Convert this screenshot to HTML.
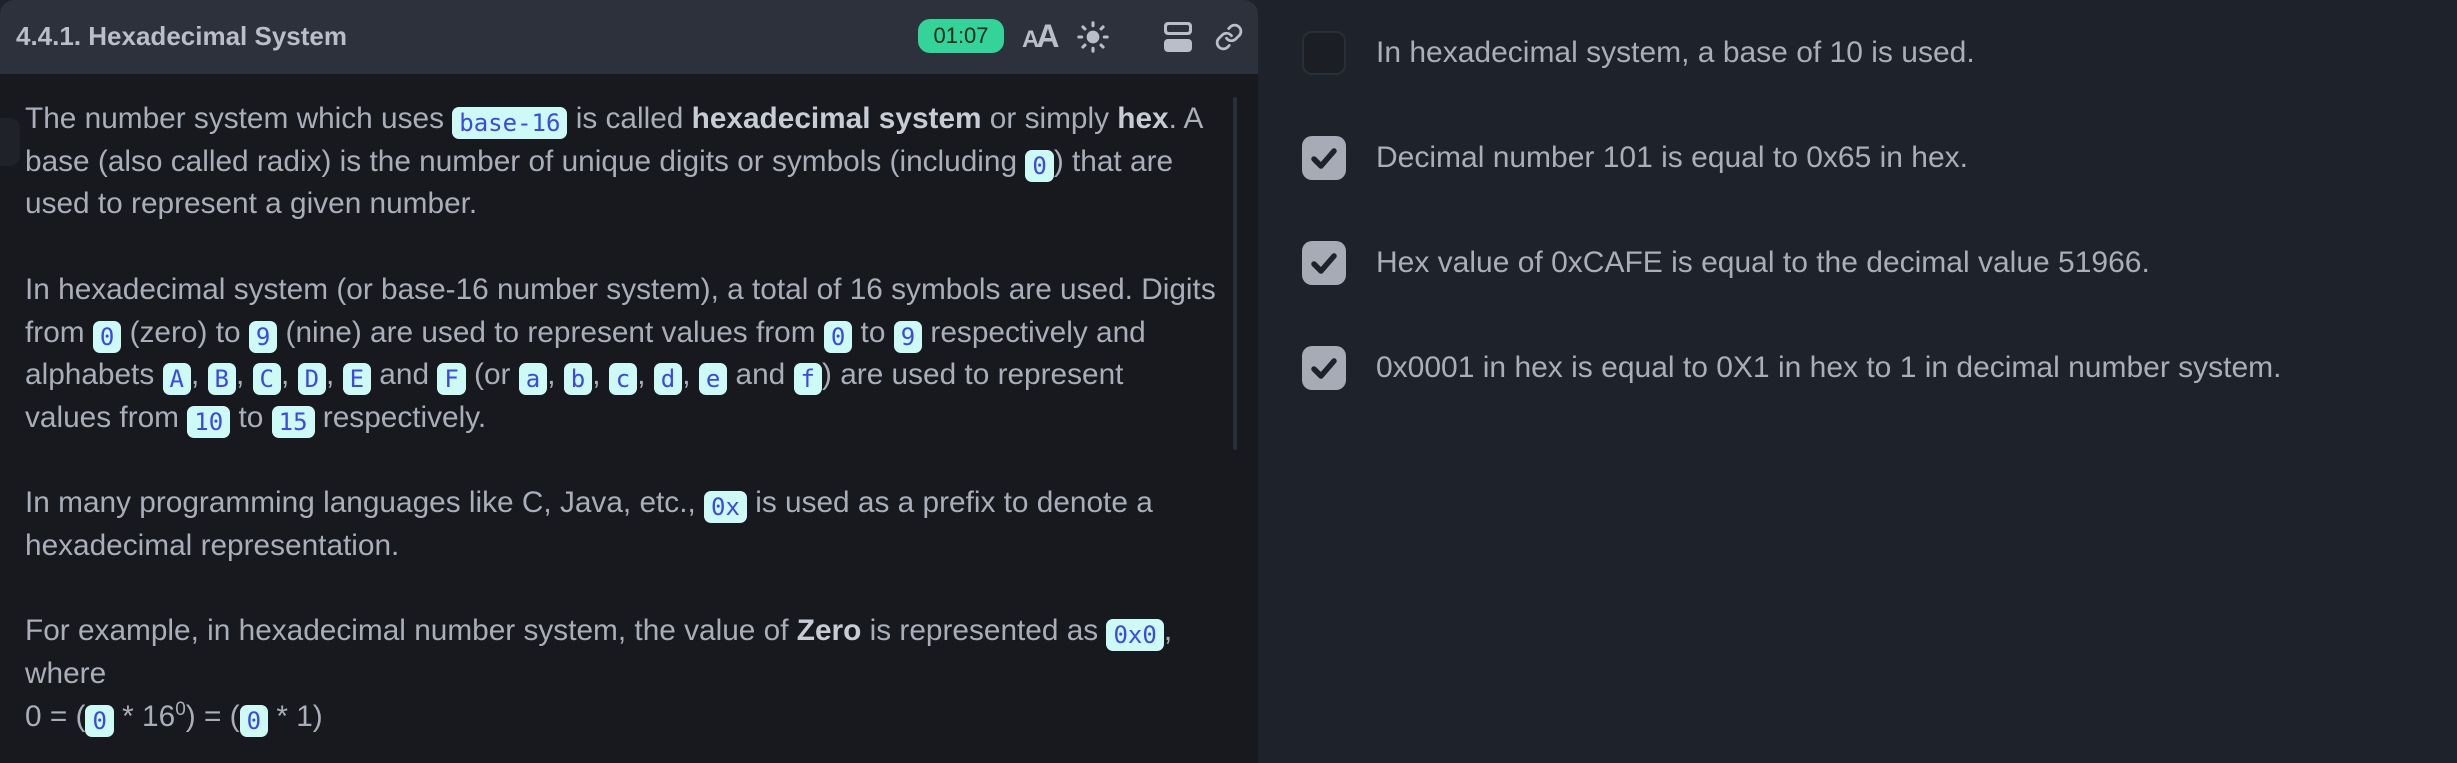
<!DOCTYPE html>
<html><head><meta charset="utf-8"><style>
*{margin:0;padding:0;box-sizing:border-box}
body{width:2457px;height:763px;background:#1e222a;font-family:"Liberation Sans",sans-serif;overflow:hidden;position:relative}
#left{position:absolute;left:0;top:0;width:1258px;height:763px;background:#17191e;border-radius:14px 14px 0 0;overflow:hidden}
#hdr{height:74px;background:#2c313c;position:relative}
#hdr .t{position:absolute;left:16px;top:21px;font-size:26px;font-weight:bold;color:#b9bec8}
.pill{position:absolute;left:918px;top:19px;width:86px;height:34px;border-radius:12px;background:#34d399;color:#0d2a1e;font-size:22px;text-align:center;line-height:34px}
#body{position:absolute;left:25px;top:98px;width:1212px;font-size:29.8px;line-height:42.7px;color:#a9aeb8}
#body p{margin-bottom:42.7px}
b{color:#c8ccd4}
code{display:inline-block;line-height:32px;font-family:"DejaVu Sans Mono",monospace;font-size:24px;background:#cdfaf6;color:#3b49e0;border-radius:7px;padding:0 7px;vertical-align:-3px}
sup{line-height:0;font-size:19px}
.sb{position:absolute;left:1233px;top:97px;width:4px;height:353px;background:#2a2e36;border-radius:2px}
.row{position:absolute;left:1302px;height:44px;width:1100px}
.cb{position:absolute;left:0;top:0;width:44px;height:44px;border-radius:10px;background:#a7abb6}
.cb.e{background:#1b1e25;border:2px solid #2a2e36}
.row span{position:absolute;left:74px;top:5px;font-size:30px;color:#a9aeb8;white-space:nowrap}
</style></head><body>
<div id="left">
<div id="hdr"><div class="t">4.4.1. Hexadecimal System</div>
<div class="pill">01:07</div>
<div style="position:absolute;left:1022px;top:18px;color:#b9bec8;font-size:32px;font-weight:bold;letter-spacing:-3px"><span style="font-size:24px">A</span>A</div>
<svg style="position:absolute;left:1076px;top:20px" width="34" height="34" viewBox="0 0 24 24" fill="#b9bec8" stroke="#b9bec8" stroke-width="2.2" stroke-linecap="round"><circle cx="12" cy="12" r="4.5" stroke="none"/><path d="M12 2v2M12 20v2M2 12h2M20 12h2M4.9 4.9l1.4 1.4M17.7 17.7l1.4 1.4M4.9 19.1l1.4-1.4M17.7 6.3l1.4-1.4"/></svg>
<svg style="position:absolute;left:1162px;top:20px" width="32" height="34" viewBox="0 0 32 34"><rect x="2" y="2" width="28" height="13" rx="4" fill="#b9bec8"/><rect x="2" y="19" width="28" height="13" rx="4" fill="#b9bec8"/><rect x="5" y="5" width="22" height="7" rx="2" fill="#2c313c"/></svg>
<svg style="position:absolute;left:1214px;top:20px" width="30" height="34" viewBox="0 0 24 24" fill="none" stroke="#b9bec8" stroke-width="2.2" stroke-linecap="round"><path d="M10 13a5 5 0 0 0 7.5.5l3-3a5 5 0 0 0-7-7l-1.7 1.7"/><path d="M14 11a5 5 0 0 0-7.5-.5l-3 3a5 5 0 0 0 7 7l1.7-1.7"/></svg>
</div>
<div style="position:absolute;left:0;top:118px;width:20px;height:48px;background:#1f2228;border-radius:0 10px 10px 0"></div>
<div class="sb"></div>
<div id="body">
<p>The number system which uses <code>base-16</code> is called <b>hexadecimal system</b> or simply <b>hex</b>. A<br>base (also called radix) is the number of unique digits or symbols (including <code>0</code>) that are<br>used to represent a given number.</p>
<p>In hexadecimal system (or base-16 number system), a total of 16 symbols are used. Digits<br>from <code>0</code> (zero) to <code>9</code> (nine) are used to represent values from <code>0</code> to <code>9</code> respectively and<br>alphabets <code>A</code>, <code>B</code>, <code>C</code>, <code>D</code>, <code>E</code> and <code>F</code> (or <code>a</code>, <code>b</code>, <code>c</code>, <code>d</code>, <code>e</code> and <code>f</code>) are used to represent<br>values from <code>10</code> to <code>15</code> respectively.</p>
<p>In many programming languages like C, Java, etc., <code>0x</code> is used as a prefix to denote a<br>hexadecimal representation.</p>
<p style="white-space:nowrap">For example, in hexadecimal number system, the value of <b>Zero</b> is represented as <code>0x0</code>,<br>where<br>0 = (<code>0</code> * 16<sup>0</sup>) = (<code>0</code> * 1)</p>
</div>
</div>
<div class="row" style="top:31px"><div class="cb e"></div><span>In hexadecimal system, a base of 10 is used.</span></div>
<div class="row" style="top:136px"><div class="cb"><svg width="44" height="44" viewBox="0 0 44 44"><path d="M12 23l7 7 13-15" fill="none" stroke="#1e222a" stroke-width="5.5" stroke-linecap="round" stroke-linejoin="round"/></svg></div><span>Decimal number 101 is equal to 0x65 in hex.</span></div>
<div class="row" style="top:241px"><div class="cb"><svg width="44" height="44" viewBox="0 0 44 44"><path d="M12 23l7 7 13-15" fill="none" stroke="#1e222a" stroke-width="5.5" stroke-linecap="round" stroke-linejoin="round"/></svg></div><span>Hex value of 0xCAFE is equal to the decimal value 51966.</span></div>
<div class="row" style="top:346px"><div class="cb"><svg width="44" height="44" viewBox="0 0 44 44"><path d="M12 23l7 7 13-15" fill="none" stroke="#1e222a" stroke-width="5.5" stroke-linecap="round" stroke-linejoin="round"/></svg></div><span>0x0001 in hex is equal to 0X1 in hex to 1 in decimal number system.</span></div>
</body></html>
